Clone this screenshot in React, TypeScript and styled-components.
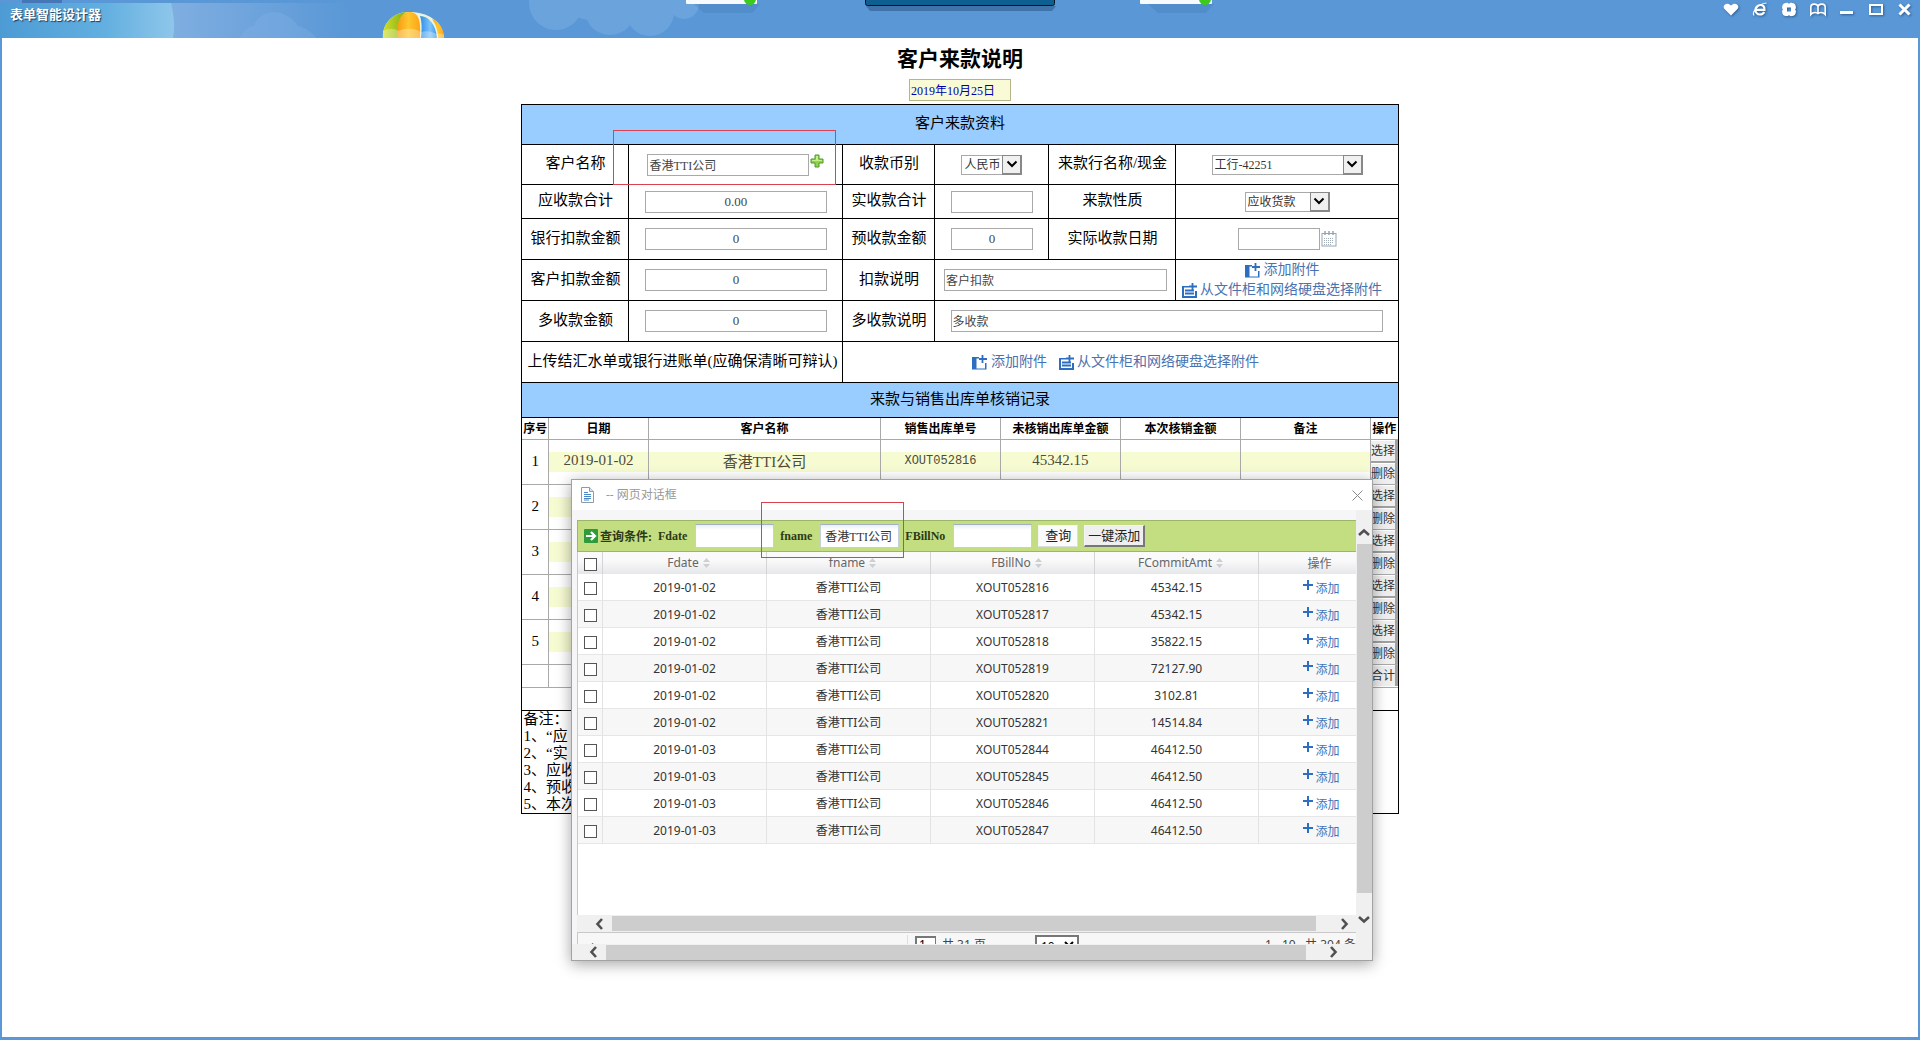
import React from "react";
import styled, { createGlobalStyle } from "styled-components";

const song = '"Liberation Serif", "Noto Sans CJK SC", serif';
const hei = '"Noto Sans", "Noto Sans CJK SC", sans-serif';
const cjk = '"Noto Sans CJK SC", sans-serif';

const Global = createGlobalStyle`
  * { box-sizing: border-box; }
  body { margin: 0; background: #fff; color: #000; font-family: ${song}; font-size: 15px; }
  button, input, select { font-family: inherit; margin: 0; border-radius: 0; }
`;

const Page = styled.div`
  min-height: 100vh;
  display: flex;
  flex-direction: column;
`;

/* ---------- window bar ---------- */

const TopBar = styled.header`
  height: 38px;
  display: flex;
  justify-content: space-between;
  align-items: flex-start;
  position: relative;
  overflow: hidden;
  background: #5997d6;
`;

const Scenery = styled.svg`
  position: absolute;
  left: 0;
  top: 0;
`;

const HangingTabs = styled.svg`
  position: absolute;
  left: 50%;
  top: 0;
  margin-left: -290px;
`;

const AppName = styled.div`
  position: relative;
  padding: 4px 0 0 10px;
  font: bold 13px/19px ${cjk};
  color: #fff;
  text-shadow: 1px 1px 1px #1c3c5c;
`;

const WindowButtons = styled.div`
  position: relative;
  display: flex;
  gap: 11px;
  padding: 1px 6px 0 0;
`;

const WindowButton = styled.button`
  width: 18px;
  height: 18px;
  padding: 0;
  border: 0;
  background: none;
  color: #fff;
  filter: drop-shadow(1px 1px 1px #2f5f93);
  svg { display: block; }
`;

/* ---------- form sheet ---------- */

const Main = styled.main`
  flex: 1;
  border: solid #5997d6;
  border-width: 0 2px 3px;
`;

const Sheet = styled.div`
  position: relative;
  width: 876px;
  margin: 0 auto;
  display: flex;
  flex-direction: column;
  align-items: center;
`;

const Title = styled.h1`
  margin: 0;
  padding: 3px 0 6px;
  font: bold 21px/32px ${cjk};
`;

const DateInput = styled.input`
  width: 102px;
  height: 22px;
  margin-bottom: 3px;
  padding: 0 1px;
  border: 1px solid #b5b58c;
  background: #f8fbd6;
  color: #0000b0;
  font-size: 12px;
`;

const FormTable = styled.table`
  width: 100%;
  table-layout: fixed;
  border-collapse: collapse;
`;

const Row = styled.tr<{ $h: number }>`
  height: ${(p) => p.$h}px;
`;

const Band = styled.th`
  padding: 0 0 6px;
  border: 1px solid #000;
  background: #99ccff;
  font-weight: normal;
`;

const Label = styled.td`
  padding: 0 0 6px;
  border: 1px solid #000;
  text-align: center;
  white-space: nowrap;
`;

const Cell = styled.td`
  padding: 0;
  border: 1px solid #000;
  text-align: center;
  vertical-align: middle;
`;

const Inline = styled.div`
  display: flex;
  justify-content: center;
  align-items: center;
  gap: 1px;
`;

const Field = styled.input<{ $w: number; $left?: boolean }>`
  display: block;
  margin: 0 auto;
  width: ${(p) => p.$w}px;
  height: 22px;
  padding: 0 1px;
  border: 1px solid #a9a9a9;
  background: #fff;
  color: #444;
  font-size: ${(p) => (p.$left ? 12 : 13)}px;
  text-align: ${(p) => (p.$left ? "left" : "center")};
  ${Inline} > & { margin: 0; }
`;

const IconButton = styled.button<{ $top?: boolean }>`
  padding: 0;
  border: 0;
  background: none;
  align-self: ${(p) => (p.$top ? "flex-start" : "center")};
  svg { display: block; }
`;

const SelectBox = styled.span<{ $w: number }>`
  display: inline-grid;
  width: ${(p) => p.$w}px;
  height: 20px;
  vertical-align: middle;
  > * { grid-area: 1 / 1; }
`;

const NativeSelect = styled.select`
  appearance: none;
  width: 100%;
  height: 20px;
  padding: 0 0 0 2px;
  border: 1px solid #a9a9a9;
  background: #fff;
  color: #333;
  font-size: 12px;
`;

const SelectArrow = styled.span`
  justify-self: end;
  width: 20px;
  height: 20px;
  display: grid;
  place-items: center;
  pointer-events: none;
  background: #f0f0f0;
  border: 1px solid #888;
  border-right-width: 2px;
  border-bottom-width: 2px;
`;

const AttachLinks = styled.div<{ $stack?: boolean }>`
  display: flex;
  flex-direction: ${(p) => (p.$stack ? "column" : "row")};
  align-items: center;
  justify-content: center;
  gap: ${(p) => (p.$stack ? 0 : 12)}px;
  padding-right: 10px;
`;

const AttachLink = styled.a<{ $gap: number }>`
  display: inline-flex;
  align-items: center;
  gap: ${(p) => p.$gap}px;
  font-size: 14px;
  line-height: 20px;
  color: #4a72b0;
  text-decoration: none;
  white-space: nowrap;
`;

/* ---------- write-off records ---------- */

const RecordsCell = styled.td`
  padding: 0;
  border: 1px solid #000;
  vertical-align: top;
`;

const Records = styled.table`
  width: 100%;
  table-layout: fixed;
  border-collapse: collapse;
  th, td {
    padding: 0;
    border: 1px solid #a9a9a9;
    text-align: center;
  }
  th { border-top: 0; font-size: 12px; font-weight: bold; white-space: nowrap; }
  th:first-child, td:first-child { border-left: 0; }
  th:last-child, td:last-child { border-right: 0; }
`;

const RecordInput = styled.input<{ $code?: boolean }>`
  display: block;
  width: 100%;
  height: 20px;
  padding: 0 0 2px;
  border: 0;
  background: #f7fbd2;
  color: #4c4c38;
  text-align: center;
  font-size: ${(p) => (p.$code ? 12 : 15)}px;
  font-family: ${(p) => (p.$code ? '"Liberation Mono", monospace' : song)};
`;

const OpStack = styled.div`
  display: flex;
  flex-direction: column;
  gap: 2px;
  background: #a0a0a0;
`;

const OpButton = styled.button`
  width: 24px;
  height: 21px;
  padding: 0;
  border: solid #fff;
  border-width: 1px 0 0 0;
  background: #efefef;
  color: #333;
  font-size: 12px;
  line-height: 18px;
  white-space: nowrap;
`;

const Notes = styled.td`
  padding: 0 1px;
  border: 1px solid #000;
  font: 15px/17px ${song};
  text-align: left;
  vertical-align: top;
`;

/* ---------- pop-up dialog ---------- */

const Dialog = styled.section`
  position: absolute;
  top: 441px;
  left: 49px;
  width: 802px;
  border: 1px solid #a2a2a2;
  background: #fff;
  box-shadow: 0 3px 14px rgba(0, 0, 0, 0.36);
  font-family: ${hei};
`;

const DialogBar = styled.div`
  height: 30px;
  display: flex;
  align-items: center;
  padding: 0 9px;
  gap: 12px;
  color: #999;
  svg { display: block; }
`;

const DialogTitle = styled.h2`
  flex: 1;
  margin: 0;
  font-size: 12px;
  line-height: 16px;
  font-weight: normal;
`;

const DialogBody = styled.div`
  display: flex;
  height: 434px;
`;

const Pane = styled.div`
  flex: 1;
  min-width: 0;
  display: flex;
  flex-direction: column;
  padding: 10px 0 0 5px;
  background: #f6f6f8;
  overflow: hidden;
`;

const SearchBar = styled.form`
  height: 32px;
  flex: none;
  display: flex;
  align-items: center;
  padding-left: 6px;
  gap: 6px;
  background: #c3de80;
  border: solid #9db568;
  border-width: 1px 0 1px 1px;
  font: bold 12px ${song};
  color: #2d3a16;
  svg { display: block; flex: none; }
`;

const SearchHeading = styled.span`
  display: flex;
  align-items: center;
  gap: 2px;
  white-space: nowrap;
`;

const SearchField = styled.label`
  display: flex;
  align-items: center;
  gap: 8px;
  white-space: nowrap;
`;

const SearchInput = styled.input`
  width: 79px;
  height: 24px;
  padding: 0 4px;
  border: 1px solid #c4cfdc;
  border-top-color: #9fb0c0;
  background: linear-gradient(#e9eff6, #fff 5px);
  font: 12px ${song};
  color: #333;
`;

const SearchButton = styled.button<{ $raised?: boolean }>`
  height: 22px;
  padding: 0;
  width: ${(p) => (p.$raised ? 61 : 40)}px;
  border: 1px solid #f4f4f4;
  border-right: ${(p) => (p.$raised ? "2px solid #777" : "1px solid #ddd")};
  border-bottom: ${(p) => (p.$raised ? "2px solid #777" : "1px solid #ddd")};
  background: ${(p) => (p.$raised ? "#efefef" : "#fbfbfb")};
  color: #222;
  font: 13px/18px ${song};
  white-space: nowrap;
`;

const GridArea = styled.div`
  flex: 1;
  min-height: 0;
  overflow: hidden;
  background: #fff;
  border-left: 1px solid #c8c8c8;
`;

const Grid = styled.table`
  width: 803px;
  table-layout: fixed;
  border-collapse: separate;
  border-spacing: 0;
  font-size: 12px;
  color: #333;
  th, td { padding: 0; text-align: center; border-right: 1px solid #e3e3e3; }
  th { height: 22px; font-weight: normal; color: #666; background: linear-gradient(#fafafa 35%, #e6e7ea); border-right-color: #d4d4d4; }
  td { height: 27px; border-bottom: 1px solid #e6e6e6; }
  tbody tr:nth-child(even) td { background: #f7f7f7; }
`;

const HeadLabel = styled.span`
  display: inline-flex;
  align-items: center;
  gap: 4px;
  padding-left: 8px;
  line-height: 20px;
`;

const Tick = styled.input`
  appearance: none;
  display: block;
  width: 13px;
  height: 13px;
  margin: 2px auto 0;
  border: 1px solid #555;
  background: #fff;
`;

const AddLink = styled.a`
  display: inline-flex;
  align-items: flex-start;
  gap: 2px;
  padding-left: 4px;
  color: #3f73b8;
  text-decoration: none;
  line-height: 18px;
`;

const ScrollRow = styled.div<{ $h: number; $l: number; $r: number; $end: number }>`
  flex: none;
  height: ${(p) => p.$h}px;
  display: grid;
  grid-template-columns: ${(p) => p.$l}px 1fr ${(p) => p.$r}px;
  align-items: center;
  padding-right: ${(p) => p.$end}px;
  background: #f0f0f0;
`;

const ScrollColumn = styled.div`
  width: 16px;
  display: grid;
  grid-template-rows: 34px 349px 51px;
  justify-items: center;
  background: #f0f0f0;
`;

const Thumb = styled.div<{ $vertical?: boolean }>`
  background: #cdcdcd;
  width: ${(p) => (p.$vertical ? "15px" : "100%")};
  height: ${(p) => (p.$vertical ? "100%" : "15px")};
`;

const ArrowButton = styled.button<{ $side: "left" | "right" | "up" | "down" }>`
  border: 0;
  background: none;
  padding: ${(p) => ({ left: "0 6px 0 0", right: "0", up: "12px 0 0", down: "0" }[p.$side])};
  justify-self: ${(p) => (p.$side === "left" || p.$side === "right" ? "end" : "center")};
  svg { display: block; }
`;

const Footer = styled.div`
  flex: none;
  height: 12px;
  overflow: hidden;
  border: 1px solid #c8c8c8;
  border-width: 1px 0 0 1px;
  background: #f7f7f7;
`;

const FooterLine = styled.div`
  height: 22px;
  display: grid;
  grid-template-columns: 317px 1fr auto;
  align-items: center;
  padding-left: 12px;
  font-size: 12px;
  color: #444;
  white-space: nowrap;
`;

const Pager = styled.div`
  height: 18px;
  display: flex;
  align-items: center;
  gap: 6px;
  padding-left: 7px;
  border-left: 1px solid #ddd;
`;

const PageInput = styled.input`
  width: 21px;
  height: 16px;
  padding: 0 2px;
  border: 2px solid #777;
  border-width: 2px 1px 1px 2px;
  font-size: 12px;
`;

const PageSize = styled.select`
  width: 44px;
  height: 18px;
  margin-left: 43px;
  border: 2px solid #777;
  background: #fff;
  font-size: 12px;
`;

const RowCount = styled.span`
  width: 91px;
  overflow: hidden;
`;

/* Red frames drawn over the page to point at a field. */
const Marker = styled.div<{ $x: number; $y: number; $w: number; $h: number }>`
  position: absolute;
  left: ${(p) => p.$x}px;
  top: ${(p) => p.$y}px;
  width: ${(p) => p.$w}px;
  height: ${(p) => p.$h}px;
  border: 1px solid #d8434e;
  pointer-events: none;
`;

/* ---------- drawings ---------- */

const Chevron = ({ side }: { side: "left" | "right" | "up" | "down" }) => {
  const turn = { left: 0, up: 90, right: 180, down: 270 }[side];
  return (
    <svg width="12" height="12" viewBox="0 0 12 12">
      <path d="M8 1 3.500 6 8 11" fill="none" stroke="#505050" strokeWidth="2.600" transform={`rotate(${turn} 6 6)`} />
    </svg>
  );
};

const PlusGreen = () => (
  <svg width="14" height="14" viewBox="0 0 14 14">
    <path d="M5 1h4v4h4v4H9v4H5V9H1V5h4z" fill="#8fd44b" stroke="#4c9a2a" />
    <path d="M6 2h2v4h4v1H2V6h4z" fill="#c6f08e" />
  </svg>
);

const Calendar = () => (
  <svg width="16" height="16" viewBox="0 0 16 16">
    <rect x="1" y="2.500" width="14" height="12.500" fill="#fff" stroke="#98a4b3" />
    <path d="M4 0v4M8 0v4M12 0v4" stroke="#98a4b3" strokeWidth="1.500" />
    <path d="M3 7.500h10M3 9.500h10M3 11.500h10M3 13.500h8" stroke="#a3aebb" strokeDasharray="1 1" />
  </svg>
);

const AttachIcon = () => (
  <svg width="15" height="15" viewBox="0 0 15 15">
    <path d="M0 2h7v1.500H4.500v10H13V8h1.500v6.500H0z" fill="#2c6fc0" />
    <path d="M10.500 0v8M7 4h8" stroke="#2c6fc0" strokeWidth="1.800" />
  </svg>
);

const CabinetIcon = () => (
  <svg width="15" height="15" viewBox="0 0 15 15">
    <path d="M0 3h7v1.500H1.500v8.500h12V8H15v7H0z" fill="#2c6fc0" />
    <path d="M10.500 0v8M7 3.500h8M3 7.500h9M3 10.500h9" stroke="#2c6fc0" strokeWidth="1.800" />
    <path d="M1 3v11M14 8v6" stroke="#2c6fc0" strokeWidth="2" />
  </svg>
);

const DocIcon = () => (
  <svg width="13" height="16" viewBox="0 0 13 16">
    <path d="M.5.500h8l4 4v11H.5z" fill="#fff" stroke="#8d9aa8" />
    <path d="M8.500.500v4h4" fill="#dde4ec" stroke="#8d9aa8" />
    <path d="M3 5.500h4M3 7.500h7M3 9.500h7M3 11.500h7M3 13h5" stroke="#4b86c6" />
  </svg>
);

const GoIcon = () => (
  <svg width="14" height="14" viewBox="0 0 14 14">
    <rect width="14" height="14" rx="1" fill="#2f9a3c" />
    <path d="M2 7h8M7 3l4 4-4 4" fill="none" stroke="#fff" strokeWidth="2.200" />
  </svg>
);

const SortIcon = () => (
  <svg width="7" height="10" viewBox="0 0 7 10">
    <path d="M3.500 0 7 4H0zM3.500 10 0 6h7z" fill="#cdcfd2" />
  </svg>
);

const AddIcon = () => (
  <svg width="10" height="10" viewBox="0 0 10 10">
    <path d="M5 0v10M0 5h10" stroke="#2c6fc0" strokeWidth="2" />
  </svg>
);

const Glyph = ({ children }: { children: React.ReactNode }) => (
  <svg width="18" height="18" viewBox="0 0 18 18">{children}</svg>
);

const SkyArt = () => (
  <Scenery width="760" height="38" viewBox="0 0 760 38">
    <defs>
      <linearGradient id="glow"><stop offset="0" stopColor="#4c9bd4" /><stop offset=".6" stopColor="#62afe0" /><stop offset="1" stopColor="#8fc6ea" /></linearGradient>
      <linearGradient id="haze"><stop offset="0" stopColor="#84b1e2" /><stop offset="1" stopColor="#5997d6" /></linearGradient>
      <linearGradient id="leaf"><stop offset="0" stopColor="#d3df2b" /><stop offset="1" stopColor="#7fae12" /></linearGradient>
      <linearGradient id="gold"><stop offset="0" stopColor="#f79a12" /><stop offset=".5" stopColor="#ffc62e" /><stop offset="1" stopColor="#fba417" /></linearGradient>
      <linearGradient id="azure"><stop offset="0" stopColor="#2f8be6" /><stop offset=".6" stopColor="#7cc4fb" /><stop offset="1" stopColor="#3d97ea" /></linearGradient>
    </defs>
    <rect x="150" y="3" width="200" height="35" fill="url(#haze)" />
    <path d="M0 3h171c3 12 4 24 2 35H0z" fill="url(#glow)" />
    <rect x="22" width="40" height="3" fill="#4576b5" />
    <path d="M240 38c4-9 9-12 14-12 2-8 11-14 20-14s19 6 24 14c7 2 14 6 18 12z" fill="#7fb0e4" opacity=".4" />
    <g fill="#8dbbe9" opacity=".35">
      <circle cx="556" cy="3" r="27" />
      <circle cx="590" cy="-6" r="26" />
      <circle cx="610" cy="10" r="25" />
      <circle cx="650" cy="12" r="24" />
      <circle cx="684" cy="4" r="15" />
    </g>
    <path d="M383 38c-1-14 9-25 24-26 18-1 36 8 37 26z" fill="#eef3d8" />
    <path d="M383 38c-1-12 7-24 23-26-7 6-9 16-8 26z" fill="url(#leaf)" />
    <path d="M397 38c-1-12 2-24 10-26 11-1 14 6 13 26z" fill="url(#gold)" />
    <path d="M421 38c1-9 1-16-1-22 9 0 16 9 17 22z" fill="url(#azure)" />
    <path d="M438 38c0-7-2-14-6-19 8 3 12 11 12 19z" fill="url(#gold)" />
    <path d="M383 31c6-3 12-3 15 0 8-3 16-3 23 1 6-2 12 0 16 2 3-1 5 0 7 1v3h-61z" fill="#fff" opacity=".3" />
  </Scenery>
);

const TabArt = () => (
  <HangingTabs width="580" height="16" viewBox="0 0 580 16">
    <path d="M24 4h66l-8 9H34zM478 4h66l-8 9h-48z" fill="#3c70ad" opacity=".25" />
    <path d="M196 6h190l-4 5H200z" fill="#2a507f" opacity=".5" />
    <rect x="16" y="-4" width="71" height="8" rx="1" fill="#f7fafd" />
    <circle cx="80" cy="-1" r="6" fill="#3ccb1c" />
    <rect x="470" y="-4" width="72" height="8" rx="1" fill="#f7fafd" />
    <circle cx="535" cy="-1" r="6" fill="#3ccb1c" />
    <rect x="195.500" y="-6" width="189" height="11.500" rx="2" fill="#0d5f92" stroke="#06121f" />
  </HangingTabs>
);

/* ---------- small pieces ---------- */

const Select = ({ w, label, value }: { w: number; label: string; value: string }) => (
  <SelectBox $w={w}>
    <NativeSelect id={label} aria-label={label} defaultValue={value}>
      <option>{value}</option>
    </NativeSelect>
    <SelectArrow>
      <svg width="12" height="8" viewBox="0 0 12 8"><path d="M1.500 1.500 6 6l4.500-4.500" fill="none" stroke="#000" strokeWidth="2" /></svg>
    </SelectArrow>
  </SelectBox>
);

const Attachments = ({ stack }: { stack?: boolean }) => (
  <AttachLinks $stack={stack}>
    <AttachLink href="#attach" $gap={4}><AttachIcon />添加附件</AttachLink>
    <AttachLink href="#cabinet" $gap={3}><CabinetIcon />从文件柜和网络硬盘选择附件</AttachLink>
  </AttachLinks>
);

const formCols = [107, 214, 92, 114, 127, 222];
const recordCols = [26, 100, 232, 120, 120, 120, 130, 27];
const gridCols = [25, 164, 164, 164, 164, 122];

const recordHeads = ["序号", "日期", "客户名称", "销售出库单号", "未核销出库单金额", "本次核销金额", "备注", "操作"];

const bills = [
  ["2019-01-02", "XOUT052816", "45342.15"],
  ["2019-01-02", "XOUT052817", "45342.15"],
  ["2019-01-02", "XOUT052818", "35822.15"],
  ["2019-01-02", "XOUT052819", "72127.90"],
  ["2019-01-02", "XOUT052820", "3102.81"],
  ["2019-01-02", "XOUT052821", "14514.84"],
  ["2019-01-03", "XOUT052844", "46412.50"],
  ["2019-01-03", "XOUT052845", "46412.50"],
  ["2019-01-03", "XOUT052846", "46412.50"],
  ["2019-01-03", "XOUT052847", "46412.50"],
];

const Cols = ({ widths }: { widths: number[] }) => (
  <colgroup>{widths.map((w, i) => <col key={i} width={w} />)}</colgroup>
);

const BillDialog = () => (
  <Dialog role="dialog" aria-label="网页对话框">
    <DialogBar>
      <DocIcon />
      <DialogTitle>-- 网页对话框</DialogTitle>
      <IconButton aria-label="关闭">
        <svg width="11" height="11" viewBox="0 0 11 11"><path d="M.5.500l10 10M10.500.500l-10 10" stroke="#888" /></svg>
      </IconButton>
    </DialogBar>
    <DialogBody>
      <Pane>
        <SearchBar onSubmit={(e) => e.preventDefault()}>
          <SearchHeading><GoIcon />查询条件:</SearchHeading>
          <SearchField>Fdate<SearchInput /></SearchField>
          <SearchField>fname<SearchInput defaultValue="香港TTI公司" /></SearchField>
          <SearchField>FBillNo<SearchInput /></SearchField>
          <SearchButton>查询</SearchButton>
          <SearchButton $raised type="button">一键添加</SearchButton>
        </SearchBar>
        <GridArea>
          <Grid>
            <Cols widths={gridCols} />
            <thead>
              <tr>
                <th><Tick type="checkbox" aria-label="全选" /></th>
                {["Fdate", "fname", "FBillNo", "FCommitAmt"].map((h) => (
                  <th key={h}><HeadLabel>{h}<SortIcon /></HeadLabel></th>
                ))}
                <th>操作</th>
              </tr>
            </thead>
            <tbody>
              {bills.map(([date, no, amount]) => (
                <tr key={no}>
                  <td><Tick type="checkbox" aria-label={no} /></td>
                  <td>{date}</td>
                  <td>香港TTI公司</td>
                  <td>{no}</td>
                  <td>{amount}</td>
                  <td><AddLink href="#add"><AddIcon />添加</AddLink></td>
                </tr>
              ))}
            </tbody>
          </Grid>
        </GridArea>
        <ScrollRow $h={17} $l={35} $r={34} $end={6}>
          <ArrowButton $side="left" aria-label="左"><Chevron side="left" /></ArrowButton>
          <Thumb />
          <ArrowButton $side="right" aria-label="右"><Chevron side="right" /></ArrowButton>
        </ScrollRow>
        <Footer>
          <FooterLine>
            <span>‹</span>
            <Pager>
              <PageInput aria-label="页码" defaultValue="1" />
              共 31 页
              <PageSize aria-label="每页条数" defaultValue="10"><option>10</option></PageSize>
            </Pager>
            <RowCount>1 - 10 &nbsp; 共 304 条</RowCount>
          </FooterLine>
        </Footer>
      </Pane>
      <ScrollColumn>
        <ArrowButton $side="up" aria-label="上"><Chevron side="up" /></ArrowButton>
        <Thumb $vertical />
        <ArrowButton $side="down" aria-label="下"><Chevron side="down" /></ArrowButton>
      </ScrollColumn>
    </DialogBody>
    <ScrollRow $h={16} $l={34} $r={33} $end={33}>
      <ArrowButton $side="left" aria-label="左"><Chevron side="left" /></ArrowButton>
      <Thumb />
      <ArrowButton $side="right" aria-label="右"><Chevron side="right" /></ArrowButton>
    </ScrollRow>
  </Dialog>
);

export default function App() {
  return (
    <Page>
      <Global />
      <TopBar>
        <SkyArt />
        <TabArt />
        <AppName>表单智能设计器</AppName>
        <WindowButtons>
          <WindowButton aria-label="收藏"><Glyph><path d="M9 14.500 2.500 8C-.5 4.500 5 .5 9 4.500c4-4 9.500 0 6.500 3.500z" fill="#fff" /></Glyph></WindowButton>
          <WindowButton aria-label="浏览器"><Glyph><path d="M5 8.800h8.500C14 5.500 11.500 4 9.500 4 6.500 4 4.500 6.200 4.500 9s2 4.500 4.500 4.500c1.800 0 3.400-.8 4.200-2.500" fill="none" stroke="#fff" strokeWidth="2.200" /><path d="M3 14.500C1 12 6 3 15.500 2" fill="none" stroke="#fff" strokeWidth="1.200" /></Glyph></WindowButton>
          <WindowButton aria-label="皮肤"><Glyph><path fillRule="evenodd" d="M6 2c1.500-.4 2.500.2 3 1 .5-.8 1.500-1.400 3-1 2.200 0 3.800 1.500 3.800 3.700.3 1.200 0 2.300-.8 2.800.8.500 1.100 1.600.8 2.800 0 2.200-1.600 3.700-3.800 3.700-1.500.4-2.500-.2-3-1-.5.800-1.500 1.400-3 1-2.200 0-3.800-1.500-3.800-3.700-.3-1.200 0-2.300.8-2.800-.8-.5-1.100-1.600-.8-2.800C2.200 3.500 3.800 2 6 2zM7 6.500v4h4v-4z" fill="#fff" /></Glyph></WindowButton>
          <WindowButton aria-label="手册"><Glyph><path d="M1.800 13.500V6C1.800 2.500 8 2 9 5.500v7.500c-.5-1.200-2-1.500-3-1.500s-3 .5-4.200 2zM9 5.500c1-3.500 7.200-3 7.200.5v7.500c-1.200-1.500-3.200-2-4.200-2s-2.500.3-3 1.500" fill="none" stroke="#fff" strokeWidth="1.600" /></Glyph></WindowButton>
          <WindowButton aria-label="最小化"><Glyph><path d="M2 11.500h13" stroke="#fff" strokeWidth="3" /></Glyph></WindowButton>
          <WindowButton aria-label="最大化"><Glyph><rect x="3" y="4" width="12" height="9" fill="none" stroke="#fff" strokeWidth="2" /></Glyph></WindowButton>
          <WindowButton aria-label="关闭窗口"><Glyph><path d="M3.500 3.500l10 10M13.500 3.500l-10 10" stroke="#fff" strokeWidth="3" /></Glyph></WindowButton>
        </WindowButtons>
      </TopBar>
      <Main>
        <Sheet>
          <Title>客户来款说明</Title>
          <DateInput aria-label="日期" defaultValue="2019年10月25日" />
          <FormTable>
            <Cols widths={formCols} />
            <tbody>
              <Row $h={40}><Band colSpan={6}>客户来款资料</Band></Row>
              <Row $h={40}>
                <Label><label htmlFor="customer">客户名称</label></Label>
                <Cell>
                  <Inline>
                    <Field id="customer" $w={162} $left defaultValue="香港TTI公司" />
                    <IconButton $top aria-label="选择客户"><PlusGreen /></IconButton>
                  </Inline>
                </Cell>
                <Label><label htmlFor="收款币别">收款币别</label></Label>
                <Cell><Select w={61} label="收款币别" value="人民币" /></Cell>
                <Label><label htmlFor="来款行名称/现金">来款行名称/现金</label></Label>
                <Cell><Select w={151} label="来款行名称/现金" value="工行-42251" /></Cell>
              </Row>
              <Row $h={34}>
                <Label><label htmlFor="due">应收款合计</label></Label>
                <Cell><Field id="due" $w={182} defaultValue="0.00" /></Cell>
                <Label><label htmlFor="got">实收款合计</label></Label>
                <Cell><Field id="got" $w={82} /></Cell>
                <Label><label htmlFor="来款性质">来款性质</label></Label>
                <Cell><Select w={85} label="来款性质" value="应收货款" /></Cell>
              </Row>
              <Row $h={41}>
                <Label><label htmlFor="bank">银行扣款金额</label></Label>
                <Cell><Field id="bank" $w={182} defaultValue="0" /></Cell>
                <Label><label htmlFor="advance">预收款金额</label></Label>
                <Cell><Field id="advance" $w={82} defaultValue="0" /></Cell>
                <Label><label htmlFor="paydate">实际收款日期</label></Label>
                <Cell>
                  <Inline>
                    <Field id="paydate" $w={82} $left />
                    <IconButton aria-label="选择日期"><Calendar /></IconButton>
                  </Inline>
                </Cell>
              </Row>
              <Row $h={41}>
                <Label><label htmlFor="deduct">客户扣款金额</label></Label>
                <Cell><Field id="deduct" $w={182} defaultValue="0" /></Cell>
                <Label><label htmlFor="why">扣款说明</label></Label>
                <Cell colSpan={2}><Field id="why" $w={223} $left defaultValue="客户扣款" /></Cell>
                <Cell><Attachments stack /></Cell>
              </Row>
              <Row $h={41}>
                <Label><label htmlFor="extra">多收款金额</label></Label>
                <Cell><Field id="extra" $w={182} defaultValue="0" /></Cell>
                <Label><label htmlFor="extrawhy">多收款说明</label></Label>
                <Cell colSpan={3}><Field id="extrawhy" $w={432} $left defaultValue="多收款" /></Cell>
              </Row>
              <Row $h={41}>
                <Label colSpan={2}>上传结汇水单或银行进账单(应确保清晰可辩认)</Label>
                <Cell colSpan={4}><Attachments /></Cell>
              </Row>
              <Row $h={35}><Band colSpan={6}>来款与销售出库单核销记录</Band></Row>
              <Row $h={293}>
                <RecordsCell colSpan={6}>
                  <Records>
                    <Cols widths={recordCols} />
                    <thead>
                      <Row $h={21}>{recordHeads.map((h) => <th key={h}>{h}</th>)}</Row>
                    </thead>
                    <tbody>
                      {[1, 2, 3, 4, 5].map((n) => (
                        <Row $h={45} key={n}>
                          <td>{n}</td>
                          <td><RecordInput aria-label={`日期 ${n}`} defaultValue={n === 1 ? "2019-01-02" : ""} /></td>
                          <td><RecordInput aria-label={`客户名称 ${n}`} defaultValue={n === 1 ? "香港TTI公司" : ""} /></td>
                          <td><RecordInput $code aria-label={`单号 ${n}`} defaultValue={n === 1 ? "XOUT052816" : ""} /></td>
                          <td><RecordInput aria-label={`未核销 ${n}`} defaultValue={n === 1 ? "45342.15" : ""} /></td>
                          <td><RecordInput aria-label={`本次核销 ${n}`} /></td>
                          <td><RecordInput aria-label={`备注 ${n}`} /></td>
                          <td><OpStack><OpButton>选择</OpButton><OpButton>删除</OpButton></OpStack></td>
                        </Row>
                      ))}
                      <Row $h={23}>
                        <td /><td /><td /><td /><td /><td /><td />
                        <td><OpStack><OpButton>合计</OpButton></OpStack></td>
                      </Row>
                    </tbody>
                  </Records>
                </RecordsCell>
              </Row>
              <Row $h={102}>
                <Notes colSpan={6}>
                  备注：<br />1、“应<br />2、“实<br />3、应收<br />4、预收<br />5、本次
                </Notes>
              </Row>
            </tbody>
          </FormTable>
          <BillDialog />
          <Marker $x={91} $y={92} $w={223} $h={55} />
          <Marker $x={239} $y={464} $w={143} $h={56} />
        </Sheet>
      </Main>
    </Page>
  );
}
